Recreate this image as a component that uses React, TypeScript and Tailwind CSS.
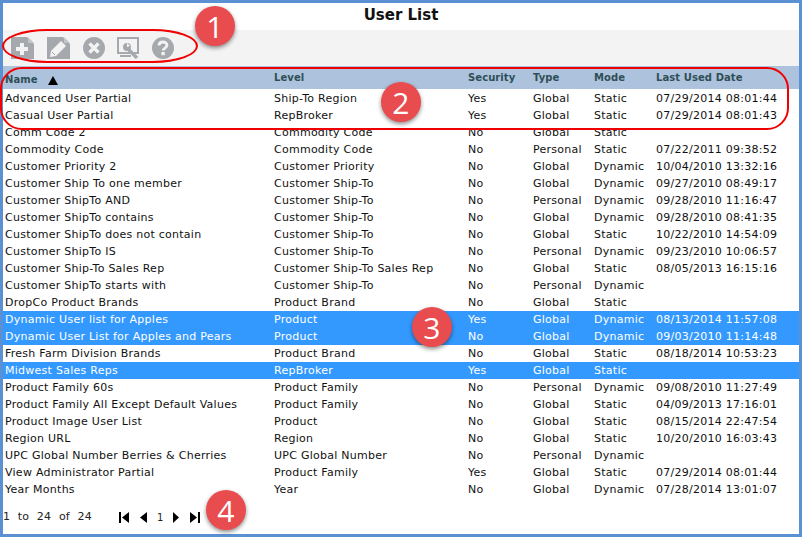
import React from 'react';

type Row = { name: string; level: string; security: string; type: string; mode: string; date: string; selected?: boolean };

const rows: Row[] = [
    { name: 'Advanced User Partial', level: 'Ship-To Region', security: 'Yes', type: 'Global', mode: 'Static', date: '07/29/2014 08:01:44' },
    { name: 'Casual User Partial', level: 'RepBroker', security: 'Yes', type: 'Global', mode: 'Static', date: '07/29/2014 08:01:43' },
    { name: 'Comm Code 2', level: 'Commodity Code', security: 'No', type: 'Global', mode: 'Static', date: '' },
    { name: 'Commodity Code', level: 'Commodity Code', security: 'No', type: 'Personal', mode: 'Static', date: '07/22/2011 09:38:52' },
    { name: 'Customer Priority 2', level: 'Customer Priority', security: 'No', type: 'Global', mode: 'Dynamic', date: '10/04/2010 13:32:16' },
    { name: 'Customer Ship To one member', level: 'Customer Ship-To', security: 'No', type: 'Global', mode: 'Dynamic', date: '09/27/2010 08:49:17' },
    { name: 'Customer ShipTo AND', level: 'Customer Ship-To', security: 'No', type: 'Personal', mode: 'Dynamic', date: '09/28/2010 11:16:47' },
    { name: 'Customer ShipTo contains', level: 'Customer Ship-To', security: 'No', type: 'Global', mode: 'Dynamic', date: '09/28/2010 08:41:35' },
    { name: 'Customer ShipTo does not contain', level: 'Customer Ship-To', security: 'No', type: 'Global', mode: 'Static', date: '10/22/2010 14:54:09' },
    { name: 'Customer ShipTo IS', level: 'Customer Ship-To', security: 'No', type: 'Personal', mode: 'Dynamic', date: '09/23/2010 10:06:57' },
    { name: 'Customer Ship-To Sales Rep', level: 'Customer Ship-To Sales Rep', security: 'No', type: 'Global', mode: 'Static', date: '08/05/2013 16:15:16' },
    { name: 'Customer ShipTo starts with', level: 'Customer Ship-To', security: 'No', type: 'Personal', mode: 'Dynamic', date: '' },
    { name: 'DropCo Product Brands', level: 'Product Brand', security: 'No', type: 'Global', mode: 'Static', date: '' },
    { name: 'Dynamic User list for Apples', level: 'Product', security: 'Yes', type: 'Global', mode: 'Dynamic', date: '08/13/2014 11:57:08', selected: true },
    { name: 'Dynamic User List for Apples and Pears', level: 'Product', security: 'No', type: 'Global', mode: 'Dynamic', date: '09/03/2010 11:14:48', selected: true },
    { name: 'Fresh Farm Division Brands', level: 'Product Brand', security: 'No', type: 'Global', mode: 'Static', date: '08/18/2014 10:53:23' },
    { name: 'Midwest Sales Reps', level: 'RepBroker', security: 'Yes', type: 'Global', mode: 'Static', date: '', selected: true },
    { name: 'Product Family 60s', level: 'Product Family', security: 'No', type: 'Personal', mode: 'Dynamic', date: '09/08/2010 11:27:49' },
    { name: 'Product Family All Except Default Values', level: 'Product Family', security: 'No', type: 'Global', mode: 'Static', date: '04/09/2013 17:16:01' },
    { name: 'Product Image User List', level: 'Product', security: 'No', type: 'Global', mode: 'Static', date: '08/15/2014 22:47:54' },
    { name: 'Region URL', level: 'Region', security: 'No', type: 'Global', mode: 'Static', date: '10/20/2010 16:03:43' },
    { name: 'UPC Global Number Berries & Cherries', level: 'UPC Global Number', security: 'No', type: 'Personal', mode: 'Dynamic', date: '' },
    { name: 'View Administrator Partial', level: 'Product Family', security: 'Yes', type: 'Global', mode: 'Static', date: '07/29/2014 08:01:44' },
    { name: 'Year Months', level: 'Year', security: 'No', type: 'Global', mode: 'Dynamic', date: '07/28/2014 13:01:07' },
];

const gridCols = 'grid grid-cols-[269px_194px_65px_61px_62px_1fr] pl-[2px]';

const Badge: React.FC<{ n: number; className: string }> = ({ n, className }) => (
    <div className={`absolute w-10 h-10 rounded-full bg-[#e84c4f] text-white text-[30px] flex items-center justify-center shadow-[0_2px_4px_rgba(0,0,0,0.45)] font-['Open_Sans',sans-serif] ${className}`}>
        {n}
    </div>
);

const icons = [
    <svg key="new" width="24" height="22" viewBox="0 0 24 22"><path d="M0 0h16l7 7v15H0z" fill="#a5a8ad" /><path d="M17 0l6 6h-6z" fill="#c4c5c7" /><path d="M5 10h4V6h4v4h4v4h-4v4H9v-4H5z" fill="#f3f3f3" /></svg>,
    <svg key="edit" width="24" height="22" viewBox="0 0 24 22"><path d="M0 0h16l7 7v15H0z" fill="#a5a8ad" /><path d="M17 0l6 6h-6z" fill="#c4c5c7" /><path d="M3 20l1-6L14 4l5 5-10 10z" fill="#f3f3f3" /><path d="M5 15l3 3" stroke="#a5a8ad" strokeWidth="1" /></svg>,
    <svg key="cancel" width="22" height="22" viewBox="0 0 22 22"><circle cx="11" cy="11" r="11" fill="#a5a8ad" /><path d="M6.5 6.5l9 9M15.5 6.5l-9 9" stroke="#f3f3f3" strokeWidth="3.4" /></svg>,
    <svg key="tool" width="23" height="22" viewBox="0 0 23 22"><path d="M0 0h22v17H0z" fill="#a5a8ad" /><path d="M2 2h18v13H2z" fill="#f3f3f3" /><circle cx="10" cy="10" r="4" fill="#a5a8ad" /><path d="M10 6l3 3-3 1z" fill="#f3f3f3" /><path d="M11 12l9 9" stroke="#a5a8ad" strokeWidth="3.4" /><path d="M3 18h11v2H3z" fill="#a5a8ad" /></svg>,
    <svg key="help" width="22" height="22" viewBox="0 0 22 22"><circle cx="11" cy="11" r="11" fill="#a5a8ad" /><path d="M7 8.5c0-2.2 1.8-3.5 4-3.5s4 1.3 4 3.3c0 2.8-3.9 2.8-3.9 5.2" fill="none" stroke="#f3f3f3" strokeWidth="2.8" /><path d="M9.4 15h3.4v3.2H9.4z" fill="#f3f3f3" /></svg>,
];

const App: React.FC = () => (
    <div className="relative w-[802px] h-[537px] overflow-hidden bg-[#5b90d3] p-[3px] font-['DejaVu_Sans',sans-serif] text-[11px] tracking-[0.26px] text-[#111]">
        <div className="h-full bg-white flex flex-col">
            <h1 className="h-[27px] pb-[2px] flex items-center justify-center text-[15px] tracking-normal font-bold text-[#111] leading-none">User List</h1>

            <div className="h-[36px] bg-[#f3f3f3] flex items-center pl-[8px] gap-[12px]">
                {icons}
            </div>

            <div className={`${gridCols} h-[23px] bg-[#adc2dd] text-[#2f4f57] text-[10px] tracking-[0.08px] font-bold items-end pb-[2px] leading-[14px]`}>
                <div className="flex items-end gap-[10px]">
                    <span>Name</span>
                    <svg width="10" height="9" viewBox="0 0 10 9" className="mb-[2px]"><path d="M5 0l5 9H0z" fill="#000" /></svg>
                </div>
                <div className="self-start mt-[5px]">Level</div>
                <div className="self-start mt-[5px]">Security</div>
                <div className="self-start mt-[5px]">Type</div>
                <div className="self-start mt-[5px]">Mode</div>
                <div className="self-start mt-[5px]">Last Used Date</div>
            </div>

            <div className="pt-[1px]">
                {rows.map(row => (
                    <div key={row.name} className={`${gridCols} h-[17px] leading-[17px] whitespace-nowrap ${row.selected ? 'bg-[#3399ff] text-white' : ''}`}>
                        <div>{row.name}</div>
                        <div>{row.level}</div>
                        <div>{row.security}</div>
                        <div>{row.type}</div>
                        <div>{row.mode}</div>
                        <div>{row.date}</div>
                    </div>
                ))}
            </div>

            <div className="flex items-center h-[17px] mt-[11px] text-[#222]">
                <span className="w-[116px] whitespace-pre">{'1  to  24  of  24'}</span>
                <div className="flex items-center">
                    <svg width="11" height="11" viewBox="0 0 11 11"><path d="M0 0h2v11H0zM10 0v11L3 5.5z" fill="#000" /></svg>
                    <svg width="7" height="11" viewBox="0 0 7 11" className="ml-[10px]"><path d="M7 0v11L0 5.5z" fill="#000" /></svg>
                    <span className="ml-[10px] w-[6px] text-[10px]">1</span>
                    <svg width="7" height="11" viewBox="0 0 7 11" className="ml-[10px]"><path d="M0 0v11l6-5.5z" fill="#000" /></svg>
                    <svg width="10" height="11" viewBox="0 0 10 11" className="ml-[10px]"><path d="M0 0v11l7-5.5zM8 0h2v11H8z" fill="#000" /></svg>
                </div>
            </div>
        </div>

        {/* callouts drawn over the screen */}
        <div className="absolute left-[2px] top-[29px] w-[196px] h-[34px] rounded-[45px/17px] border-2 border-[#f00000]" />
        <div className="absolute left-[0px] top-[67px] w-[789px] h-[63px] rounded-[22px] border-2 border-[#f00000]" />
        <Badge n={1} className="left-[195px] top-[6px]" />
        <Badge n={2} className="left-[381px] top-[82px]" />
        <Badge n={3} className="left-[412px] top-[307px]" />
        <Badge n={4} className="left-[206px] top-[490px]" />
    </div>
);

export default App;
